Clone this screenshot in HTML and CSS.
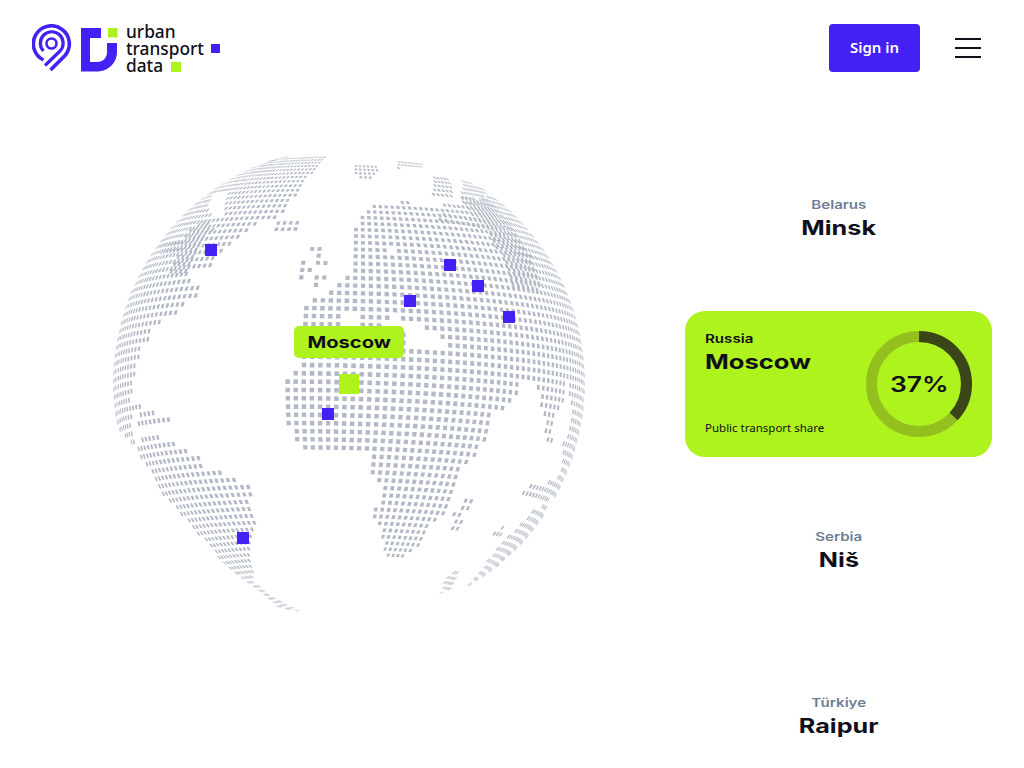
FILE: index.html
```html
<!DOCTYPE html>
<html lang="en">
<head>
    <meta charset="UTF-8">
    <meta name="viewport" content="width=device-width, initial-scale=1.0">
    <title>Urban Transport Data</title>
    <link rel="stylesheet" href="styles.css">
</head>
<body>
    <!-- Header -->
    <header class="header">
        <a class="logo" href="#">
            <svg class="logo-mark" width="86" height="48" viewBox="32 24 86 48">
                <g fill="none" stroke="#4420f5">
                    <path stroke-width="3.6" d="M43.500 60A18 18 0 1 1 65 55.500L50.500 70"/>
                    <path stroke-width="3.2" d="M43.500 51A11.400 11.400 0 1 1 60 51L45 65.500"/>
                    <circle stroke-width="2.6" cx="51.500" cy="43.500" r="5"/>
                </g>
                <path fill="#4420f5" d="M81 28H101V38H90V62H97C103 62 107 58 107 52V43H117V52C117 63 108 71.500 97 71.500H81Z"/>
                <rect fill="#aff31e" x="108" y="28" width="9.500" height="9.500"/>
            </svg>
            <span class="logo-text">
                <span class="logo-line">urban</span>
                <span class="logo-line">transport<i class="logo-dot logo-dot-blue"></i></span>
                <span class="logo-line">data<i class="logo-dot logo-dot-lime"></i></span>
            </span>
        </a>
        <div class="header-actions">
            <button class="signin">Sign in</button>
            <div class="burger"><span></span><span></span><span></span></div>
        </div>
    </header>

    <main class="main">
        <!-- Globe -->
        <div class="globe">
            <svg id="globeDots" width="500" height="500" viewBox="100 133 500 500"></svg>
            <span class="pin pin-1"></span>
            <span class="pin pin-2"></span>
            <span class="pin pin-3"></span>
            <span class="pin pin-4"></span>
            <span class="pin pin-5"></span>
            <span class="pin pin-6"></span>
            <span class="pin pin-7"></span>
            <span class="pin-active"></span>
            <div class="globe-label"><span class="wide">Moscow</span></div>
        </div>

        <!-- Cities -->
        <div class="cities">
            <div class="city">
                <div class="city-country"><span class="wide">Belarus</span></div>
                <div class="city-name"><span class="wide">Minsk</span></div>
            </div>
            <div class="city-card">
                <div class="card-text">
                    <div class="card-country"><span class="wide-left">Russia</span></div>
                    <div class="card-name"><span class="wide-left">Moscow</span></div>
                    <div class="card-note">Public transport share</div>
                </div>
                <div class="donut">
                    <svg width="106" height="106" viewBox="0 0 106 106">
                        <circle class="donut-track" cx="53" cy="53" r="47.500"/>
                        <circle class="donut-value" cx="53" cy="53" r="47.500" pathLength="100" stroke-dasharray="37 63" transform="rotate(-90 53 53)"/>
                    </svg>
                    <span class="donut-number"><span class="wide">37%</span></span>
                </div>
            </div>
            <div class="city">
                <div class="city-country"><span class="wide">Serbia</span></div>
                <div class="city-name"><span class="wide">Niš</span></div>
            </div>
            <div class="city">
                <div class="city-country"><span class="wide">Türkiye</span></div>
                <div class="city-name"><span class="wide">Raipur</span></div>
            </div>
        </div>
    </main>

    <script src="globe.js"></script>
</body>
</html>
```

FILE: styles.css
```css
html, body {
    height: 100%;
    overflow: hidden;
}
body {
    margin: 0;
    background-color: #fff;
    color: #10101a;
    font-family: "Noto Sans", sans-serif;
}
/* Header */
.header {
    display: flex;
    justify-content: space-between;
    padding: 24px 43px 0 32px;
    height: 48px;
}
.logo {
    display: flex;
    gap: 8px;
    color: #10101a;
    text-decoration: none;
}
.logo-text {
    display: flex;
    flex-direction: column;
    margin-top: -1px;
    font-size: 17.3px;
    font-weight: 500;
    line-height: 17px;
}
.logo-line {
    display: flex;
    align-items: center;
    height: 17px;
    white-space: nowrap;
}
.logo-dot {
    display: block;
    width: 9.5px;
    height: 9.5px;
}
.logo-dot-blue {
    margin-left: 7px;
    background-color: #4420f5;
}
.logo-dot-lime {
    margin-left: 8px;
    margin-top: 3px;
    background-color: #aff31e;
}
.header-actions {
    display: flex;
    align-items: center;
    gap: 35px;
}
.signin {
    width: 91px;
    height: 48px;
    padding-bottom: 3px;
    border: 0;
    border-radius: 4px;
    background-color: #4420f5;
    color: #fff;
    font-family: "Noto Sans", sans-serif;
    font-size: 15px;
    font-weight: 600;
}
.burger {
    display: flex;
    flex-direction: column;
    gap: 7px;
    width: 26px;
}
.burger span {
    height: 2px;
    background-color: #10101a;
}
/* Main */
.main {
    display: flex;
    padding: 73px 0 0 100px;
}
.globe {
    position: relative;
    flex: none;
    width: 500px;
    height: 500px;
    margin-top: -12px;
}
.globe svg {
    display: block;
}
.pin {
    position: absolute;
    width: 12px;
    height: 12px;
    background-color: #4420f5;
}
.pin-1 { left: 105px; top: 111px; }
.pin-2 { left: 344px; top: 126px; }
.pin-3 { left: 372px; top: 147px; }
.pin-4 { left: 304px; top: 162px; }
.pin-5 { left: 403px; top: 178px; }
.pin-6 { left: 222px; top: 275px; }
.pin-7 { left: 137px; top: 399px; }
.pin-active {
    position: absolute;
    left: 239px;
    top: 241px;
    width: 20px;
    height: 20px;
    background-color: #aff31e;
}
.globe-label {
    position: absolute;
    left: 194px;
    top: 193px;
    display: flex;
    justify-content: center;
    align-items: center;
    width: 110px;
    height: 32px;
    border-radius: 5px;
    background-color: #aff31e;
    font-family: Inter, sans-serif;
    font-size: 16px;
    font-weight: 700;
}
/* Stretched headline type */
.wide {
    display: inline-block;
    transform: scaleX(1.26);
}
.wide-left {
    display: inline-block;
    transform: scaleX(1.26);
    transform-origin: left center;
}
/* City list */
.cities {
    display: flex;
    flex-direction: column;
    gap: 20px;
    flex: none;
    width: 307px;
    margin-left: 85px;
}
.city {
    display: flex;
    flex-direction: column;
    align-items: center;
    justify-content: center;
    height: 146px;
    padding-top: 4px;
    box-sizing: border-box;
    font-family: Inter, sans-serif;
}
.city-country {
    color: #6f7d95;
    font-size: 12px;
    font-weight: 600;
    line-height: 16px;
}
.city-name {
    font-size: 20px;
    font-weight: 700;
    line-height: 30px;
}
.city-card {
    display: flex;
    justify-content: space-between;
    align-items: center;
    box-sizing: border-box;
    height: 146px;
    padding: 0 20px;
    border-radius: 20px;
    background-color: #aff31e;
}
.card-text {
    display: flex;
    flex-direction: column;
    height: 146px;
    padding-top: 20px;
    box-sizing: border-box;
    font-family: Inter, sans-serif;
}
.card-country {
    font-size: 12px;
    font-weight: 600;
    line-height: 16px;
}
.card-name {
    font-size: 20.3px;
    font-weight: 700;
    line-height: 30px;
}
.card-note {
    margin-top: 42px;
    font-family: "Noto Sans", sans-serif;
    font-size: 11.5px;
    line-height: 18px;
}
.donut {
    position: relative;
    width: 106px;
    height: 106px;
}
.donut svg {
    display: block;
}
.donut-track, .donut-value {
    fill: none;
    stroke-width: 11;
}
.donut-track {
    stroke: #93c01e;
}
.donut-value {
    stroke: #3a4518;
}
.donut-number {
    position: absolute;
    left: 0;
    right: 0;
    top: 0;
    bottom: 0;
    display: flex;
    justify-content: center;
    align-items: center;
    font-family: Inter, sans-serif;
    font-size: 21px;
    font-weight: 600;
}
```

FILE: globe.js
```js
// Dot-matrix globe: a lat/lon grid on a sphere, kept only where it lands on a shape below.
// All shapes are in page pixels, same as the svg viewBox.
const CX = 349, CY = 383, R = 236;
const TILT = 5.5 * Math.PI / 180;
const ROLL = -1.3 * Math.PI / 180;
const STEP = 2.02;
const DOT = 0.56;

const land = [
    // north america
    [[325,157],[320,165],[303,183],[297,193],[287,208],[280,215],[263,222],[250,228],[233,242],[227,248],[213,263],[210,270],[193,270],[187,278],[195,285],[203,292],[190,300],[183,308],[172,317],[152,327],[152,337],[142,345],[140,353],[137,362],[134,380],[100,380],[100,150],[255,150],[290,157]],
    [[273,218],[300,217],[300,233],[272,233]],
    // islands north of europe
    [[312,246],[325,246],[325,258],[312,258]],
    [[313,259],[332,259],[332,269],[313,269]],
    [[298,261],[310,261],[310,272],[298,272]],
    [[297,275],[303,275],[303,280],[297,280]],
    [[313,273],[325,273],[325,280],[313,280]],
    [[312,281],[318,281],[318,287],[312,287]],
    // eurasia and africa
    [[305,307],[330,290],[337,283],[345,275],[352,267],[350,253],[350,233],[360,222],[367,208],[383,203],[410,202],[423,208],[433,207],[453,202],[473,202],[490,195],[600,250],[600,383],[517,383],[517,393],[510,403],[498,411],[490,419],[490,428],[489,436],[482,443],[480,452],[473,460],[465,467],[457,475],[455,483],[453,490],[452,497],[450,504],[448,512],[440,518],[432,525],[430,531],[423,537],[422,543],[413,550],[407,556],[383,557],[384,550],[385,543],[379,538],[380,525],[373,520],[374,506],[382,498],[382,490],[375,484],[375,477],[367,470],[367,453],[345,449],[303,450],[295,442],[295,432],[286,427],[285,408],[283,383],[292,373],[297,365],[305,323]],
    // right of the ocean gap
    [[535,383],[566,383],[566,395],[562,404],[557,412],[552,425],[552,447],[545,447],[545,425],[541,412],[539,395]],
    [[569,383],[600,383],[600,500],[555,500],[548,490],[555,480],[560,470],[563,445],[570,430],[571,411]],
    [[533,482],[557,482],[552,500],[537,503],[523,497],[524,490]],
    [[548,505],[543,518],[535,530],[525,545],[510,562],[493,574],[477,586],[465,588],[480,572],[490,557],[500,545],[510,535],[520,525],[530,515],[535,507]],
    [[494,532],[505,525],[505,532],[500,538],[494,538]],
    [[462,568],[458,575],[450,590],[441,593],[445,580],[452,572]],
    [[466,495],[476,495],[472,512],[463,515],[460,532],[449,533],[452,518],[457,508]],
    // top islands
    [[352,166],[378,166],[378,173],[367,181],[360,181],[353,174]],
    [[397,162],[422,162],[422,168],[397,168]],
    [[433,177],[450,177],[452,198],[433,198]],
    [[462,180],[490,190],[483,199],[462,199]],
    // south america
    [[135,447],[148,434],[160,434],[162,441],[175,442],[187,450],[200,456],[203,465],[217,471],[231,478],[251,483],[253,492],[252,506],[255,527],[252,540],[250,553],[252,570],[255,583],[270,595],[302,612],[280,608],[257,590],[240,577],[223,563],[207,543],[190,525],[172,505],[160,493],[155,483],[152,473],[140,456]],
    // central america
    [[100,378],[134,378],[134,386],[131,400],[143,404],[131,420],[130,428],[137,440],[132,445],[122,432],[100,420]],
    [[140,409],[155,409],[155,425],[138,425]],
    [[158,413],[171,413],[170,418],[167,426],[158,425]]
];

const holes = [
    [[215,192],[228,190],[225,205],[222,215],[210,215],[207,205]],
    [[403,323],[427,328],[445,340],[447,347],[405,348]],
    [[340,312],[362,312],[362,326],[340,326]],
    [[385,318],[403,318],[403,328],[385,328]],
    [[387,247],[393,247],[393,257],[387,257]]
];

// denser moire bands, drawn with a second grid on top
const bands = [
    [[458,198],[488,198],[512,227],[532,257],[542,290],[512,290],[502,257],[482,227]],
    [[440,210],[513,220],[513,233],[440,224]],
    [[200,222],[218,226],[200,245],[190,272],[170,272],[180,240]],
    [[160,243],[190,243],[190,252],[160,252]]
];

function inside(p, poly) {
    let hit = false;
    for (let i = 0, j = poly.length - 1; i < poly.length; j = i++) {
        const a = poly[i], b = poly[j];
        if ((a[1] > p[1]) !== (b[1] > p[1]) &&
            p[0] < (b[0] - a[0]) * (p[1] - a[1]) / (b[1] - a[1]) + a[0]) hit = !hit;
    }
    return hit;
}

// degrees on the sphere to page pixels, null on the far side
function project(lat, lon, roll) {
    const phi = lat * Math.PI / 180, lam = lon * Math.PI / 180;
    const x = Math.cos(phi) * Math.sin(lam);
    const y = Math.sin(phi) * Math.cos(TILT) + Math.cos(phi) * Math.cos(lam) * Math.sin(TILT);
    const z = Math.cos(phi) * Math.cos(lam) * Math.cos(TILT) - Math.sin(phi) * Math.sin(TILT);
    if (z < 0.02) return null;
    const xr = x * Math.cos(roll) - y * Math.sin(roll);
    const yr = x * Math.sin(roll) + y * Math.cos(roll);
    return [CX + R * xr, CY - R * yr];
}

function dot(lat, lon, roll) {
    const pts = [[-DOT, -DOT], [-DOT, DOT], [DOT, DOT], [DOT, -DOT]].map(o => project(lat + o[0], lon + o[1], roll));
    if (pts.some(p => !p)) return '';
    return 'M' + pts.map(p => p[0].toFixed(1) + ' ' + p[1].toFixed(1)).join('L') + 'Z';
}

let d = '';
for (let i = -45; i <= 45; i++) {
    const lat = i * STEP - 3.3;
    for (let j = -60; j <= 60; j++) {
        const lon = j * STEP - 1.0;
        if (Math.abs(lon) > 100) continue;
        const p = project(lat, lon, ROLL);
        if (!p) continue;
        if (land.some(s => inside(p, s)) && !holes.some(s => inside(p, s))) d += dot(lat, lon, ROLL);
        const q = project(lat + 0.9, lon * 1.05, ROLL - 0.09);
        if (q && bands.some(s => inside(q, s))) d += dot(lat + 0.9, lon * 1.05, ROLL - 0.09);
    }
}

const path = document.createElementNS('http://www.w3.org/2000/svg', 'path');
path.setAttribute('d', d);
path.setAttribute('fill', '#b3b9c6');
document.getElementById('globeDots').appendChild(path);
```
